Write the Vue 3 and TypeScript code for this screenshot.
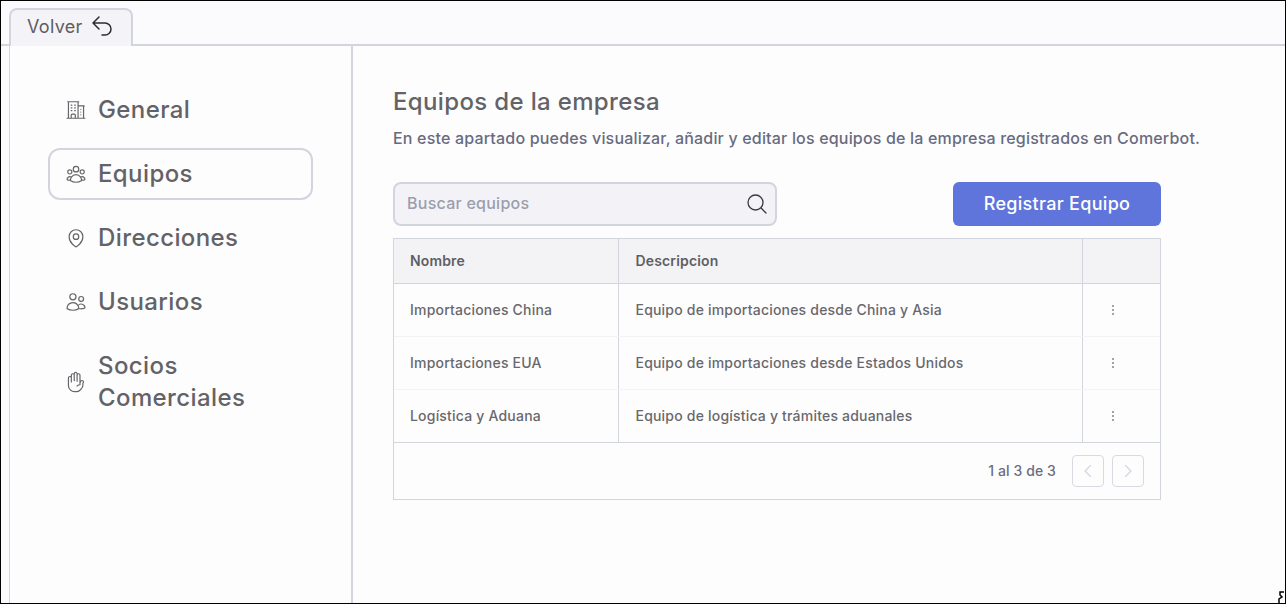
<script setup lang="ts">
interface NavItem { key: string; label: string; active?: boolean }
interface Team { name: string; desc: string }

const nav: NavItem[] = [
  { key: 'building', label: 'General' },
  { key: 'group', label: 'Equipos', active: true },
  { key: 'pin', label: 'Direcciones' },
  { key: 'users', label: 'Usuarios' },
  { key: 'hand', label: 'Socios Comerciales' },
]

const teams: Team[] = [
  { name: 'Importaciones China', desc: 'Equipo de importaciones desde China y Asia' },
  { name: 'Importaciones EUA', desc: 'Equipo de importaciones desde Estados Unidos' },
  { name: 'Logística y Aduana', desc: 'Equipo de logística y trámites aduanales' },
]

const icons: Record<string, string[]> = {
  building: ['M2.25 21h19.5m-18-18v18m10.5-18v18m6-13.5V21M6.75 6.75h.75m-.75 3h.75m-.75 3h.75m3-6h.75m-.75 3h.75m-.75 3h.75M6.75 21v-3.375c0-.621.504-1.125 1.125-1.125h2.25c.621 0 1.125.504 1.125 1.125V21M3 3h12m-.75 4.5H21m-3.750 3.750h.008v.008h-.008v-.008zm0 3h.008v.008h-.008v-.008zm0 3h.008v.008h-.008v-.008z'],
  group: ['M18 18.72a9.094 9.094 0 003.741-.479 3 3 0 00-4.682-2.72m.94 3.198l.001.031c0 .225-.012.447-.037.666A11.944 11.944 0 0112 21c-2.170 0-4.207-.576-5.963-1.584A6.062 6.062 0 016 18.719m12 0a5.971 5.971 0 00-.941-3.197m0 0A5.995 5.995 0 0012 12.750a5.995 5.995 0 00-5.058 2.772m0 0a3 3 0 00-4.681 2.720 8.986 8.986 0 003.740.477m.94-3.197a5.971 5.971 0 00-.94 3.197M15 6.750a3 3 0 11-6 0 3 3 0 016 0zm6 3a2.250 2.250 0 11-4.500 0 2.250 2.250 0 014.500 0zm-13.500 0a2.250 2.250 0 11-4.500 0 2.250 2.250 0 014.500 0z'],
  pin: ['M15 10.500a3 3 0 11-6 0 3 3 0 016 0z', 'M19.500 10.500c0 7.142-7.500 11.250-7.500 11.250S4.500 17.642 4.500 10.500a7.500 7.500 0 1115 0z'],
  users: ['M15 19.128a9.380 9.380 0 002.625.372 9.337 9.337 0 004.121-.952 4.125 4.125 0 00-7.533-2.493M15 19.128v-.003c0-1.113-.285-2.160-.786-3.070M15 19.128v.106A12.318 12.318 0 018.624 21c-2.331 0-4.512-.645-6.374-1.766l-.001-.109a6.375 6.375 0 0111.964-3.070M12 6.375a3.375 3.375 0 11-6.750 0 3.375 3.375 0 016.750 0zm8.250 2.250a2.625 2.625 0 11-5.250 0 2.625 2.625 0 015.250 0z'],
  hand: ['M10.050 4.575a1.575 1.575 0 10-3.150 0v3m3.150-3v-1.500a1.575 1.575 0 013.150 0v1.500m-3.150 0l.075 5.925m3.075.750V4.575m0 0a1.575 1.575 0 013.150 0V15M6.900 7.575a1.575 1.575 0 10-3.150 0v8.175a6.750 6.750 0 006.750 6.750h2.018a5.250 5.250 0 003.712-1.538l1.732-1.732a5.250 5.250 0 001.538-3.712l.003-2.024a.668.668 0 01.198-.471 1.575 1.575 0 10-2.228-2.228 3.818 3.818 0 00-1.120 2.687M6.900 7.575V12m6.270 4.318A4.490 4.490 0 0116.350 15m.002 0h-.002'],
}
</script>

<template>
  <div class="page">
    <header class="topbar">
      <button class="back">
        <span>Volver</span>
        <svg width="24" height="24" viewBox="0 0 24 24" fill="none" stroke="#2b2b30" stroke-width="1.5" stroke-linecap="round" stroke-linejoin="round">
          <path d="M9 15L3 9m0 0l6-6M3 9h12a6 6 0 010 12h-3" />
        </svg>
      </button>
    </header>
    <div class="body">
      <aside class="side">
        <nav class="nav">
          <a v-for="item in nav" :key="item.key" class="nav-item" :class="{ active: item.active }">
            <svg class="nav-icon" viewBox="0 0 24 24" fill="none" stroke="#66666a" stroke-width="1.3" stroke-linecap="round" stroke-linejoin="round">
              <path v-for="d in icons[item.key]" :key="d" :d="d" />
            </svg>
            <span class="nav-label">{{ item.label }}</span>
          </a>
        </nav>
      </aside>
      <main class="main">
        <h1 class="title">Equipos de la empresa</h1>
        <p class="sub">En este apartado puedes visualizar, añadir y editar los equipos de la empresa registrados en Comerbot.</p>
        <div class="content">
          <div class="toolbar">
            <label class="search">
              <span class="placeholder">Buscar equipos</span>
              <svg width="24" height="24" viewBox="0 0 24 24" fill="none" stroke="#3a3a40" stroke-width="1.3" stroke-linecap="round" stroke-linejoin="round">
                <path d="M21 21l-5.197-5.197m0 0A7.500 7.500 0 105.196 5.196a7.500 7.500 0 0010.607 10.607z" />
              </svg>
            </label>
            <button class="primary">Registrar Equipo</button>
          </div>
          <div class="table-wrap">
            <table class="table">
              <colgroup>
                <col class="c1" />
                <col />
                <col class="c3" />
              </colgroup>
              <thead>
                <tr>
                  <th>Nombre</th>
                  <th>Descripcion</th>
                  <th></th>
                </tr>
              </thead>
              <tbody>
                <tr v-for="t in teams" :key="t.name">
                  <td>{{ t.name }}</td>
                  <td>{{ t.desc }}</td>
                  <td class="menu">
                    <svg width="16" height="16" viewBox="0 0 16 16" fill="#85858a">
                      <rect x="7" y="3" width="2" height="2" rx="1" />
                      <rect x="7" y="7" width="2" height="2" rx="1" />
                      <rect x="7" y="11" width="2" height="2" rx="1" />
                    </svg>
                  </td>
                </tr>
              </tbody>
            </table>
            <div class="pager">
              <span class="count">1 al 3 de 3</span>
              <button class="page-btn" aria-label="Anterior">
                <svg width="16" height="16" viewBox="0 0 16 16" fill="none" stroke="#d3d6e0" stroke-width="1.300" stroke-linecap="round" stroke-linejoin="round"><path d="M10.500 2.500L5 8l5.500 5.500" /></svg>
              </button>
              <button class="page-btn" aria-label="Siguiente">
                <svg width="16" height="16" viewBox="0 0 16 16" fill="none" stroke="#d3d6e0" stroke-width="1.300" stroke-linecap="round" stroke-linejoin="round"><path d="M5.500 2.500L11 8l-5.500 5.500" /></svg>
              </button>
            </div>
          </div>
        </div>
      </main>
    </div>
    <svg class="cursor" width="7" height="12" viewBox="0 0 7 12" fill="none" stroke="#000" stroke-width="1.500"><path d="M6 1H2v3l2 2-3 2v4" /></svg>
  </div>
</template>

<style>
html, body { margin: 0; padding: 0; }
</style>

<style scoped>
.page {
  position: relative;
  box-sizing: border-box;
  width: 1286px;
  height: 604px;
  border: 1px solid #000;
  background: #fbfbfe;
  font-family: Inter, "Liberation Sans", sans-serif;
  font-weight: 500;
  display: flex;
  flex-direction: column;
  overflow: hidden;
}
.cursor { position: absolute; right: 0; bottom: 0; }
.topbar {
  box-sizing: border-box;
  height: 45px;
  padding: 7px 0 0 8px;
  border-bottom: 2px solid #d2d5de;
  display: flex;
  flex-shrink: 0;
}
.back {
  box-sizing: border-box;
  width: 124px;
  height: 38px;
  padding: 0 0 4px 16px;
  border: 2px solid #d2d5de;
  border-bottom: 0;
  border-radius: 8px 8px 0 0;
  background: #f4f4f8;
  display: flex;
  align-items: center;
  gap: 7px;
  font: 400 18px Inter, sans-serif;
  letter-spacing: .3px;
  color: #5d5d62;
}
.body {
  flex: 1;
  min-height: 0;
  margin-left: 8px;
  display: flex;
  background: #fefdfe;
  border-left: 1px solid #d2d5de;
}
.side {
  box-sizing: border-box;
  width: 343px;
  padding: 38px 0 0 38px;
  border-right: 2px solid #d2d5de;
  flex-shrink: 0;
}
.nav {
  width: 265px;
  display: flex;
  flex-direction: column;
  gap: 12px;
}
.nav-item {
  box-sizing: border-box;
  min-height: 52px;
  padding: 8px 16px 8px 15px;
  border: 2px solid transparent;
  border-radius: 12px;
  display: flex;
  align-items: center;
  gap: 11px;
  font-size: 24px;
  line-height: 32px;
  letter-spacing: .4px;
  color: #636367;
}
.nav-item.active { border-color: #d2d5de; }
.nav-icon { width: 22px; height: 22px; flex-shrink: 0; }
.nav-label { width: 170px; }
.main {
  flex: 1;
  min-width: 0;
  padding: 39px 0 0 40px;
}
.title {
  margin: 0;
  font-size: 24px;
  line-height: 34px;
  font-weight: 500;
  letter-spacing: .35px;
  color: #636367;
}
.sub {
  margin: 7px 0 0;
  font-size: 16px;
  line-height: 24px;
  letter-spacing: .18px;
  color: #686b80;
  white-space: nowrap;
}
.content { width: 768px; margin-top: 32px; }
.toolbar {
  display: flex;
  justify-content: space-between;
  margin-bottom: 12px;
}
.search {
  box-sizing: border-box;
  width: 384px;
  height: 44px;
  padding: 0 6px 2px 12px;
  border: 2px solid #d2d5de;
  border-radius: 8px;
  background: #f3f3f7;
  display: flex;
  align-items: center;
  justify-content: space-between;
}
.search svg { margin-top: 2px; }
.placeholder { font-size: 16px; letter-spacing: .25px; color: #9a9eae; }
.primary {
  width: 208px;
  height: 44px;
  padding: 0 0 2px;
  border: 0;
  border-radius: 6px;
  background: #5f75db;
  color: #fff;
  font: 500 18px Inter, sans-serif;
  letter-spacing: .3px;
}
.table-wrap {
  box-sizing: border-box;
  border: 1px solid #d2d5de;
}
.table {
  width: 100%;
  border-collapse: collapse;
  table-layout: fixed;
}
.c1 { width: 224px; }
.c3 { width: 78px; }
th, td {
  box-sizing: border-box;
  padding: 0 16px;
  text-align: left;
  font-size: 14px;
  letter-spacing: .2px;
  color: #68686c;
}
th + th, td + td { padding-left: 17px; }
th {
  height: 44px;
  font-weight: 600;
  letter-spacing: .15px;
  color: #5f5f63;
  background: #f3f3f6;
  border-bottom: 1px solid #d2d5de;
}
td {
  height: 53px;
  font-weight: 500;
  border-bottom: 1px solid #f3f3f6;
}
tbody tr:last-child td { border-bottom: 1px solid #d2d5de; }
th + th, td + td { border-left: 1px solid #d2d5de; }
td.menu { padding: 0 0 0 22px; }
td.menu svg { display: block; }
.pager {
  height: 56px;
  padding-right: 16px;
  display: flex;
  align-items: center;
  justify-content: flex-end;
  gap: 8px;
}
.count {
  margin-right: 8px;
  font-size: 14px;
  letter-spacing: .1px;
  color: #6b6e80;
}
.page-btn {
  box-sizing: border-box;
  width: 32px;
  height: 32px;
  padding: 0;
  border: 1px solid #d8dae3;
  border-radius: 4px;
  background: transparent;
  display: flex;
  align-items: center;
  justify-content: center;
}
</style>
